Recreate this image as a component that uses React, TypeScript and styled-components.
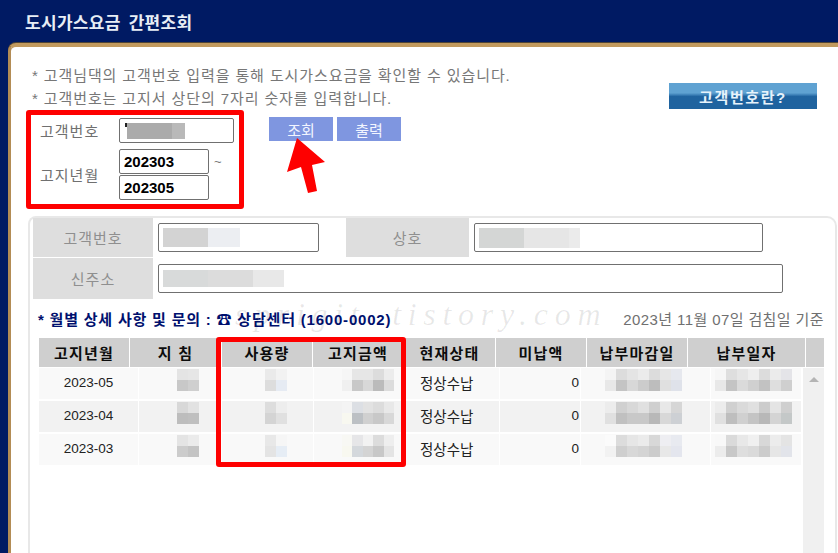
import React from 'react';
import styled, { createGlobalStyle } from 'styled-components';

const GlobalStyle = createGlobalStyle`
  html, body {
    margin: 0;
    padding: 0;
    background: #001a63;
  }
  * {
    box-sizing: border-box;
  }
`;

const KR = `"Liberation Sans", "Noto Sans CJK KR", sans-serif`;

const Page = styled.div`
  width: 838px;
  height: 553px;
  overflow: hidden;
  background: #001a63;
  font-family: ${KR};
`;

const TopBar = styled.div`
  display: flex;
  align-items: center;
  height: 43px;
  padding-left: 25px;
  color: #e8eef5;
  font-size: 17px;
  font-weight: 700;
  letter-spacing: 0.3px;
  word-spacing: 3px;
`;

const Panel = styled.div`
  position: relative;
  height: 510px;
  margin-left: 8px;
  padding: 17px 0 0 18px;
  background: #fff;
  border-top: 4px solid #c29a5e;
  border-left: 3px solid #b38c55;
  border-top-left-radius: 8px;
  box-shadow: 0 -1px 0 #4f4436;
`;

const TopSection = styled.div`
  display: flex;
  justify-content: space-between;
  padding: 0 21px 0 3px;
`;

const Notices = styled.div`
  color: #777;
  font-size: 15px;
  line-height: 23px;
  letter-spacing: 0.9px;
`;

const HelpButton = styled.div`
  display: flex;
  align-items: center;
  justify-content: center;
  width: 148px;
  height: 26px;
  margin-top: 19px;
  color: #e6f2fb;
  font-size: 15px;
  font-weight: 700;
  letter-spacing: 1.6px;
  background: linear-gradient(#5fa2d2 0, #5fa2d2 38%, #3b7fb6 46%, #1f639f 52%, #1f639f 100%);
`;

const FormRow = styled.div`
  position: relative;
  display: flex;
  align-items: flex-start;
  margin-left: -3px;
`;

const RedBox = styled.div`
  display: grid;
  grid-template-columns: 79px auto;
  grid-template-rows: 25px 51px;
  row-gap: 6px;
  align-items: center;
  width: 218px;
  height: 99px;
  padding: 3px 0 0 9px;
  border: 5px solid #fe0000;
  border-radius: 3px;
`;

const FormLabel = styled.div`
  color: #707070;
  font-size: 15px;
  letter-spacing: 1px;
`;

const TextBox = styled.div<{ $w: number }>`
  display: flex;
  align-items: center;
  width: ${(p) => p.$w}px;
  height: 25px;
  padding-left: 4px;
  color: #000;
  font-size: 15px;
  font-weight: 700;
  background: #fff;
  border: 1px solid #707070;
  border-radius: 2px;
`;

const DateStack = styled.div`
  display: flex;
  flex-direction: column;
  gap: 1px;
`;

const DateLine = styled.div`
  display: flex;
  align-items: center;
  gap: 5px;
  color: #777;
  font-size: 13px;
`;

const Buttons = styled.div`
  display: flex;
  gap: 4px;
  margin: 7px 0 0 25px;
`;

const BlueButton = styled.div`
  display: flex;
  align-items: center;
  justify-content: center;
  width: 64px;
  height: 24px;
  color: #f2f5ff;
  font-size: 15px;
  background: #7f96e0;
`;

const Arrow = styled.svg`
  position: absolute;
  left: 261px;
  top: 28px;
`;

const Sheet = styled.div`
  position: relative;
  width: 809px;
  height: 340px;
  margin: 7px 0 0 -1px;
  padding: 0 0 0 3px;
  border: 2px solid #e8e8e8;
  border-bottom: 0;
  border-top-left-radius: 8px;
  border-top-right-radius: 10px;
`;

const InfoGrid = styled.div`
  display: grid;
  grid-template-columns: 120px 166px 27px 123px auto;
  grid-template-rows: 39px 41px;
  row-gap: 1px;
`;

const FieldName = styled.div`
  display: flex;
  align-items: center;
  justify-content: center;
  color: #8f8f8f;
  font-size: 15px;
  letter-spacing: 1px;
  background: #dedede;
`;

const FieldCell = styled.div`
  display: flex;
  align-items: center;
  padding-left: 5px;
`;

const WideCell = styled(FieldCell)`
  grid-column: 2 / -1;
`;

const FieldBox = styled.div<{ $w: number }>`
  display: flex;
  align-items: center;
  width: ${(p) => p.$w}px;
  height: 29px;
  padding-left: 4px;
  background: #fff;
  border: 1px solid #707070;
  border-radius: 2px;
`;

const InfoLine = styled.div`
  display: flex;
  align-items: center;
  justify-content: space-between;
  height: 39px;
  padding: 0 11px 0 5px;
`;

const InfoLeft = styled.div`
  color: #00106e;
  font-size: 15px;
  font-weight: 700;
  letter-spacing: 0.8px;
`;

const InfoRight = styled.div`
  color: #707070;
  font-size: 15px;
  letter-spacing: 0.4px;
`;

const Watermark = styled.div`
  position: absolute;
  left: 205px;
  top: 78px;
  color: rgba(0, 0, 0, 0.09);
  font-family: "Liberation Serif", serif;
  font-size: 32px;
  font-style: italic;
  letter-spacing: 6.7px;
  word-spacing: 12px;
  white-space: nowrap;
  pointer-events: none;
`;

const TableWrap = styled.div`
  position: relative;
  width: 785px;
  margin-left: 6px;
`;

const HeadRow = styled.div`
  display: grid;
  grid-template-columns: 90px 91px 90px 90px 91px 90px 100px 117px 18px;
  gap: 1px;
  height: 29px;
`;

const HeadCell = styled.div`
  display: flex;
  align-items: center;
  justify-content: center;
  color: #0c0c0c;
  font-size: 15px;
  font-weight: 700;
  letter-spacing: 1.2px;
  background: #cfcfcf;
`;

const BodyWrap = styled.div`
  display: flex;
  gap: 3px;
  margin-top: 1px;
`;

const Rows = styled.div`
  display: flex;
  flex-direction: column;
  gap: 2px;
  width: 761px;
`;

const Row = styled.div<{ $alt?: boolean }>`
  display: grid;
  grid-template-columns: 99px 82px 91px 90px 94px 80px 129px 90px;
  gap: 1px;
  height: 31px;
  background: #fff;

  & > div {
    background: ${(p) => (p.$alt ? '#f2f2f2' : '#f9f9f9')};
  }
`;

const Cell = styled.div<{ $align?: string; $pad?: number }>`
  display: flex;
  align-items: center;
  justify-content: ${(p) => p.$align || 'center'};
  padding: 0 ${(p) => p.$pad || 0}px 2px;
  color: #222;
  font-size: 13.5px;
`;

const StatusCell = styled(Cell)`
  padding-bottom: 3px;
  font-size: 14.5px;
`;

const Scrollbar = styled.div`
  display: flex;
  justify-content: center;
  width: 21px;
  height: 190px;
  padding-top: 9px;
  background: #f0f0f0;
`;

const ScrollArrow = styled.div`
  width: 0;
  height: 0;
  border-left: 5px solid transparent;
  border-right: 5px solid transparent;
  border-bottom: 5px solid #b4b4b4;
`;

const Highlight = styled.div`
  position: absolute;
  left: 177px;
  top: -1px;
  width: 190px;
  height: 130px;
  border: 5px solid #fe0000;
  border-radius: 3px;
  pointer-events: none;
`;

const Mosaic = styled.div<{ $cols: number; $size: number }>`
  display: grid;
  grid-template-columns: repeat(${(p) => p.$cols}, ${(p) => p.$size}px);
  grid-auto-rows: 11px;
  align-self: flex-start;
  margin-top: 1px;
  background: transparent !important;
`;

const Bar = styled.div`
  display: flex;
`;

const BarPart = styled.div<{ $w: number; $h: number; $c: string }>`
  width: ${(p) => p.$w}px;
  height: ${(p) => p.$h}px;
  background: ${(p) => p.$c};
`;

const Tile = styled.div<{ $c: string }>`
  background: ${(p) => p.$c};
`;

function Blur({ tones, cols, size = 11 }: { tones: string[]; cols: number; size?: number }) {
  return (
    <Mosaic $cols={cols} $size={size}>
      {tones.map((t, i) => (
        <Tile key={i} $c={t} />
      ))}
    </Mosaic>
  );
}

const rows = [
  {
    month: '2023-05',
    meter: ['#e4e4e4', '#e6e6e6', '#c8c8c8', '#cfcfcf'],
    usage: ['#eaeaea', '#f2f2f2', '#dddddd', '#e6ebf3'],
    amount: ['#f6f6f6', '#e6e6e6', '#e6e6e6', '#dcdcdc', '#ececec', '#f0f0f0', '#c8c8c8', '#d8d8d8', '#bbbbbb', '#dcdcdc'],
    due: ['#f4f4f4', '#dcdcdc', '#e4e4e4', '#ebebeb', '#dcdcdc', '#e6e6e6', '#e6e8ee', '#e8e8e8', '#c4c4c4', '#d8d8d8', '#cccccc', '#bdbdbd', '#e0e0e0', '#dfe2ea'],
    paid: ['#f6f6f6', '#dedede', '#e6e6e6', '#eeeeee', '#dcdcdc', '#ebebeb', '#e4e4e8', '#e8e8e8', '#c4c4c4', '#dadada', '#d0d0d0', '#c2c2c2', '#dedede', '#cfcfcf'],
  },
  {
    month: '2023-04',
    meter: ['#d8d8d8', '#e2e2e2', '#bdbdbd', '#bfbfbf'],
    usage: ['#dddddd', '#ededed', '#d4d4d4', '#e0e0e0'],
    amount: ['#f4f4f4', '#dcdfe4', '#e2e2e2', '#dcdcdc', '#e8e8e8', '#f8f8f0', '#bcc0c4', '#d0d0d0', '#c8c8c8', '#d8d8d8'],
    due: ['#ececec', '#d0d0d0', '#d8d8d8', '#e0e0e0', '#cfcfcf', '#e8e8e8', '#d6d6d6', '#e0e0e0', '#c0c0c0', '#c8c8c8', '#c8c8c8', '#b8b8b8', '#d8d8d8', '#cdd0d4'],
    paid: ['#ececec', '#d0d0d0', '#dadada', '#e0e0e0', '#cccccc', '#e4e4e4', '#cfcfcf', '#e0e0e0', '#bebebe', '#d0d0d0', '#c4c4c4', '#b8b8b8', '#d4d4d4', '#c4c8c8'],
  },
  {
    month: '2023-03',
    meter: ['#e4e4e4', '#ebebeb', '#cccccc', '#c4c4c4'],
    usage: ['#e8e8e8', '#f6f6f6', '#e4e4e4', '#e6edf5'],
    amount: ['#f8f8f4', '#e6e6e8', '#f2f2f2', '#dcdcdc', '#eeeeee', '#f8f8f0', '#d4d8dc', '#d4d4d4', '#c8c8c8', '#e4e4e4'],
    due: ['#fbfbfb', '#dcdcdc', '#e6e6e6', '#ebebeb', '#d8d8d8', '#eeeef2', '#e8eaf0', '#f2f2f2', '#cfcfcf', '#d8d8d8', '#d4d4d4', '#cccccc', '#e8e8e8', '#e4e6ee'],
    paid: ['#f8f8f8', '#dadada', '#e8e8e8', '#f0f0f0', '#d8d8d8', '#ececec', '#e4e4e4', '#ececec', '#c8c8c8', '#dedede', '#dadada', '#cccccc', '#e6e6e6', '#e2e4ea'],
  },
];

const heads = ['고지년월', '지 침', '사용량', '고지금액', '현재상태', '미납액', '납부마감일', '납부일자', ''];

function App() {
  return (
    <Page>
      <GlobalStyle />
      <TopBar>도시가스요금 간편조회</TopBar>
      <Panel>
        <TopSection>
          <Notices>
            <div>* 고객님댁의 고객번호 입력을 통해 도시가스요금을 확인할 수 있습니다.</div>
            <div>* 고객번호는 고지서 상단의 7자리 숫자를 입력합니다.</div>
          </Notices>
          <HelpButton>고객번호란?</HelpButton>
        </TopSection>
        <FormRow>
          <RedBox>
            <FormLabel>고객번호</FormLabel>
            <TextBox $w={115}>
              <Bar>
                <BarPart $w={1} $h={16} $c="#fff" />
                <BarPart $w={2} $h={4} $c="#222" />
                <BarPart $w={45} $h={16} $c="#ababab" />
                <BarPart $w={13} $h={16} $c="#b9b9b9" />
              </Bar>
            </TextBox>
            <FormLabel>고지년월</FormLabel>
            <DateStack>
              <DateLine>
                <TextBox $w={90}>202303</TextBox>~
              </DateLine>
              <TextBox $w={90}>202305</TextBox>
            </DateStack>
          </RedBox>
          <Buttons>
            <BlueButton>조회</BlueButton>
            <BlueButton>출력</BlueButton>
          </Buttons>
          <Arrow width="40" height="56" viewBox="0 0 40 56">
            <polygon points="10,0 0,34 14,29 21,55 30,53 25,27 38,24" fill="#fe0000" />
          </Arrow>
        </FormRow>
        <Sheet>
          <Watermark>sprigit tistory.com</Watermark>
          <InfoGrid>
            <FieldName>고객번호</FieldName>
            <FieldCell>
              <FieldBox $w={161}>
                <Bar>
                  <BarPart $w={45} $h={19} $c="#d3d3d3" />
                  <BarPart $w={32} $h={19} $c="#eceef2" />
                </Bar>
              </FieldBox>
            </FieldCell>
            <div />
            <FieldName>상호</FieldName>
            <FieldCell>
              <FieldBox $w={289}>
                <Bar>
                  <BarPart $w={45} $h={20} $c="#d4d6d5" />
                  <BarPart $w={45} $h={20} $c="#e6e6e6" />
                  <BarPart $w={11} $h={20} $c="#ebebeb" />
                </Bar>
              </FieldBox>
            </FieldCell>
            <FieldName>신주소</FieldName>
            <WideCell>
              <FieldBox $w={625}>
                <Bar>
                  <BarPart $w={45} $h={17} $c="#d8dada" />
                  <BarPart $w={45} $h={17} $c="#dcdcdc" />
                  <BarPart $w={31} $h={17} $c="#e8e8e8" />
                </Bar>
              </FieldBox>
            </WideCell>
          </InfoGrid>
          <InfoLine>
            <InfoLeft>* 월별 상세 사항 및 문의 : ☎ 상담센터 (1600-0002)</InfoLeft>
            <InfoRight>2023년 11월 07일 검침일 기준</InfoRight>
          </InfoLine>
          <TableWrap>
            <HeadRow>
              {heads.map((h, i) => (
                <HeadCell key={i}>{h}</HeadCell>
              ))}
            </HeadRow>
            <BodyWrap>
              <Rows>
                {rows.map((r, i) => (
                  <Row key={r.month} $alt={i === 1}>
                    <Cell>{r.month}</Cell>
                    <Cell $align="flex-end" $pad={22}>
                      <Blur tones={r.meter} cols={2} />
                    </Cell>
                    <Cell $align="flex-end" $pad={26}>
                      <Blur tones={r.usage} cols={2} />
                    </Cell>
                    <Cell $align="flex-end" $pad={10}>
                      <Blur tones={r.amount} cols={5} size={10.4} />
                    </Cell>
                    <StatusCell $align="flex-start" $pad={15}>
                      정상수납
                    </StatusCell>
                    <Cell $align="flex-end" $pad={1}>
                      0
                    </Cell>
                    <Cell $align="flex-start" $pad={24}>
                      <Blur tones={r.due} cols={7} />
                    </Cell>
                    <Cell $align="flex-start" $pad={4}>
                      <Blur tones={r.paid} cols={7} />
                    </Cell>
                  </Row>
                ))}
              </Rows>
              <Scrollbar>
                <ScrollArrow />
              </Scrollbar>
            </BodyWrap>
            <Highlight />
          </TableWrap>
        </Sheet>
      </Panel>
    </Page>
  );
}

export default App;
